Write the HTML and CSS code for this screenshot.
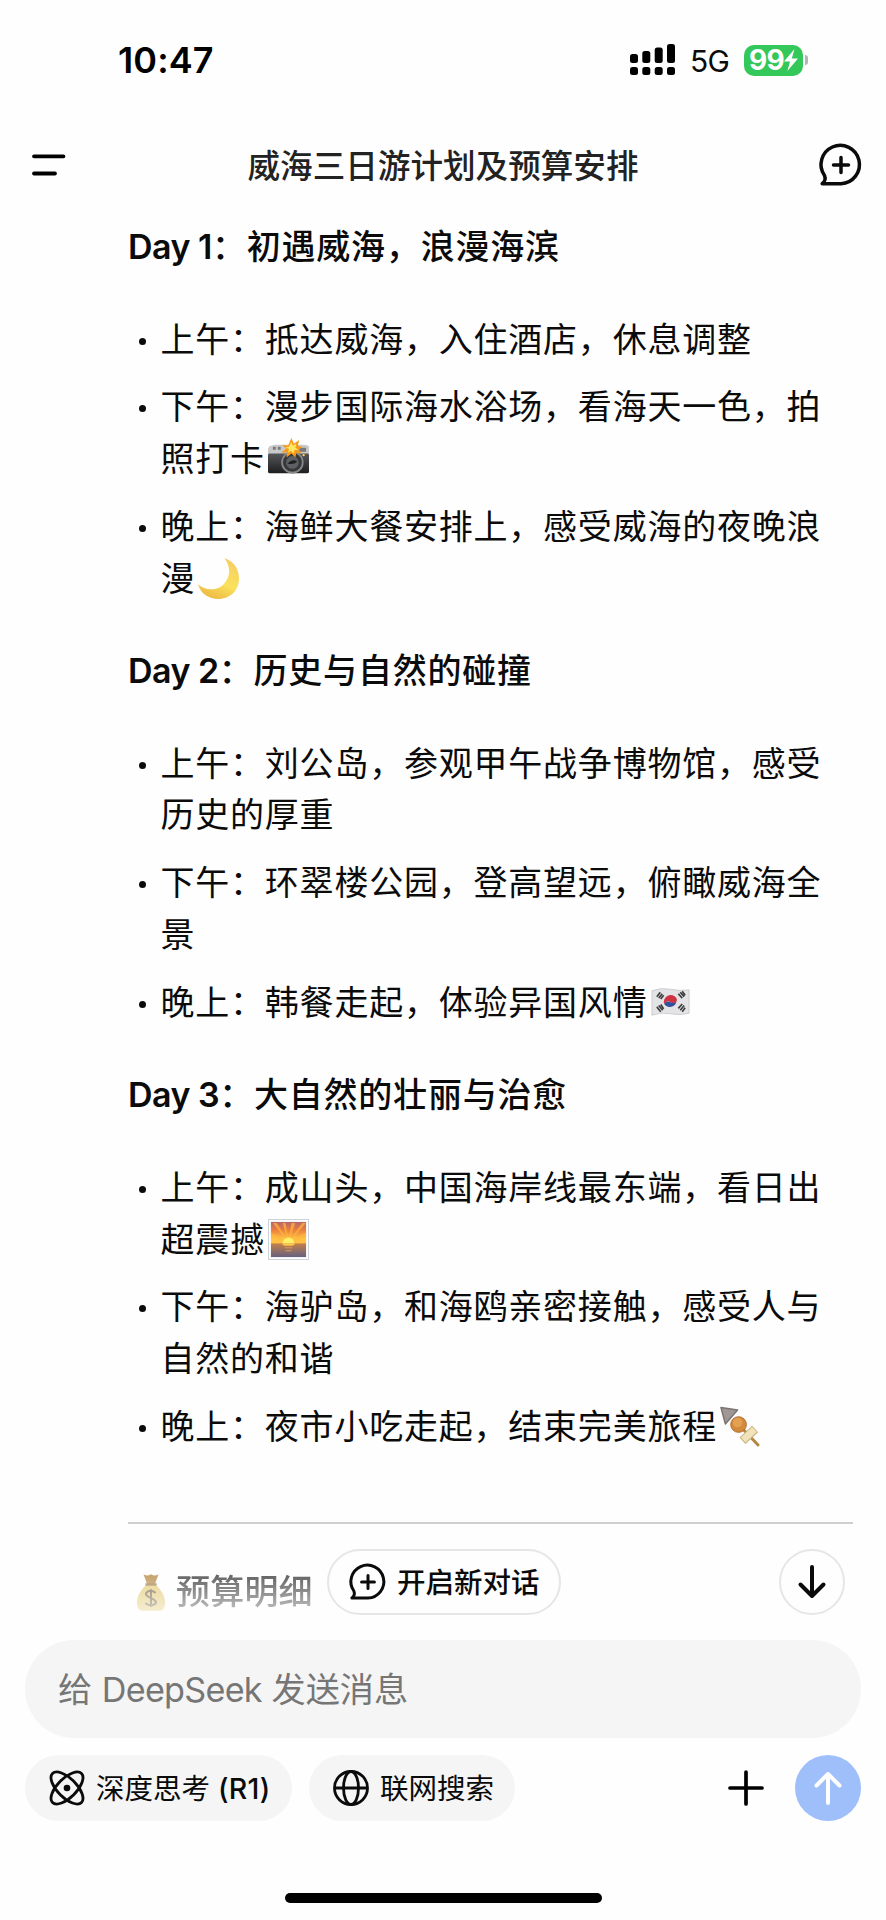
FILE: index.html
```
<!DOCTYPE html>
<html lang="zh-CN">
<head>
    <meta charset="UTF-8">
    <meta name="viewport" content="width=device-width, initial-scale=1.0">
    <title>威海三日游计划及预算安排</title>
    <link rel="stylesheet" href="styles.css">
</head>
<body>
    <div class="app">
        <div class="status-bar">
            <span class="time">10:47</span>
            <div class="status-right">
                <svg class="signal" viewBox="0 0 46 32">
                    <rect x="0" y="10" width="8" height="9" rx="2.5"/>
                    <rect x="12.3" y="7" width="8" height="12" rx="2.5"/>
                    <rect x="24.7" y="3.5" width="8" height="15.5" rx="2.5"/>
                    <rect x="37" y="0" width="8" height="19" rx="2.5"/>
                    <rect x="0" y="23" width="8" height="8" rx="2.5"/>
                    <rect x="12.3" y="23" width="8" height="8" rx="2.5"/>
                    <rect x="24.7" y="23" width="8" height="8" rx="2.5"/>
                    <rect x="37" y="23" width="8" height="8" rx="2.5"/>
                </svg>
                <span class="network">5G</span>
                <div class="battery">
                    <span>99</span>
                    <svg class="bolt" viewBox="0 0 14 22"><path d="M10.5 0 0 12.4h6L3.4 22 14 9.4H7.8z"/></svg>
                </div>
                <span class="battery-cap"></span>
            </div>
        </div>

        <div class="header">
            <svg class="menu-icon" viewBox="0 0 34 22"><path d="M2 2.3h29.500M2 19.500h21"/></svg>
            <h1>威海三日游计划及预算安排</h1>
            <svg class="chat-icon" viewBox="0 0 42 42"><path d="M21 39.700H2.200Q6.500 36.500 4.500 31.500A19.200 19.200 0 1 1 21 39.700zM21 13.500v15M13.500 21h15"/></svg>
        </div>

        <div class="content">
            <h2><span class="day">Day 1</span>：初遇威海，浪漫海滨</h2>
            <ul>
                <li>上午：抵达威海，入住酒店，休息调整</li>
                <li>下午：漫步国际海水浴场，看海天一色，拍照打卡<svg class="emoji" viewBox="0 0 42 42">
                    <defs>
                        <linearGradient id="cam" x2="0" y2="1"><stop stop-color="#55565a"/><stop offset="1" stop-color="#1e1e20"/></linearGradient>
                    </defs>
                    <path d="M0 12q0-3 3-4l4-1h29q5 0 6 2v8H0z" fill="#c9c9ca"/>
                    <rect y="16" width="42" height="20" rx="1.500" fill="url(#cam)"/>
                    <path d="M5 9h3v3H5zM10 9h3v3h-3zM32 10h7v4h-7z" fill="#77797a"/>
                    <circle cx="25" cy="25" r="11.500" fill="#86888a"/>
                    <circle cx="25" cy="25" r="9.700" fill="#37383a"/>
                    <circle cx="25" cy="25" r="6.500" fill="#5d6064"/>
                    <path d="M20 26q5-5 10-2-4 4-10 2z" fill="#1e2024"/>
                    <path d="m24 0 2.500 6L32 2l-1.500 6 5 1-4.500 3 4 4-6-1-1 5-4-4-5 4 .5-5.500-6 .5 5-4-4-4 6 1z" fill="#f79a18"/>
                    <path d="m24 4 1.500 4 3.500-2-1 4 3 2-4 .5-1 3.500-2.500-3-3 2 1-4-4-1 4-1z" fill="#ffe763"/>
                    <circle cx="36.500" cy="17.500" r="1.200" fill="#ffd34b"/>
                </svg></li>
                <li>晚上：海鲜大餐安排上，感受威海的夜晚浪漫<svg class="emoji" viewBox="0 0 42 42">
                    <defs>
                        <linearGradient id="moon" x1=".8" y1=".1" x2=".4" y2="1"><stop stop-color="#f6cf63"/><stop offset=".55" stop-color="#fae25c"/><stop offset="1" stop-color="#eebb45"/></linearGradient>
                    </defs>
                    <path d="M27 0C38 4 42 12 42 21 42 33 33 42 21 42 11 42 3 37 0 27 8 34 20 34 27 26 34 18 33 8 27 0z" fill="url(#moon)"/>
                </svg></li>
            </ul>

            <h2><span class="day">Day 2</span>：历史与自然的碰撞</h2>
            <ul>
                <li>上午：刘公岛，参观甲午战争博物馆，感受历史的厚重</li>
                <li>下午：环翠楼公园，登高望远，俯瞰威海全景</li>
                <li>晚上：韩餐走起，体验异国风情<svg class="emoji" viewBox="0 0 42 42">
                    <path d="M2 9q9-3.500 19-1.500T40 8v24q-9 2.500-19 .5T2 34z" fill="#e4e4e6" stroke="#c4c4c7" stroke-width=".8"/>
                    <path d="M14.500 22.500a7 7 0 0 1 12.500-6q1.500 3-1 4.500t-5.500-.5-6 2z" fill="#cf3343"/>
                    <path d="M14.500 22.500q2.500-3.500 6-2t5.500.5 1-4.500a7 7 0 0 1-12.500 6z" fill="#31519b"/>
                    <g stroke="#3c3c3e" stroke-width="1.700">
                        <path d="m7 15 3.500-4.500M9 16.500l3.500-4.500M11 17.500l3-4M29 12l4 4.500M31 10.500l4 4.500M33 9.500l3 4M7 25.500l4 5M9 24l4 5M11 23l3 4.500M29 27l4-4.500M31 29l4-5M33 30.500l3-4"/>
                    </g>
                </svg></li>
            </ul>

            <h2><span class="day">Day 3</span>：大自然的壮丽与治愈</h2>
            <ul>
                <li>上午：成山头，中国海岸线最东端，看日出超震撼<svg class="emoji" viewBox="0 0 42 42">
                    <defs>
                        <linearGradient id="sky" x2="0" y2="1"><stop stop-color="#b5656a"/><stop offset=".35" stop-color="#ec7e3d"/><stop offset=".7" stop-color="#ffc044"/></linearGradient>
                        <linearGradient id="sea" x2="0" y2="1"><stop stop-color="#c38048"/><stop offset="1" stop-color="#666080"/></linearGradient>
                    </defs>
                    <rect x=".5" y=".5" width="41" height="41" fill="#fdfdfd" stroke="#cbd1d8"/>
                    <rect x="3" y="3" width="36" height="24" fill="url(#sky)"/>
                    <path d="M21 24 5 4h4zM21 24 15 4h3zM21 24l3-20h4zM21 24 35 4h4zM21 24 3 14v4zM21 24l18-10v4z" fill="#ffb83d" opacity=".7"/>
                    <rect x="3" y="25" width="36" height="14" fill="url(#sea)"/>
                    <path d="M15 25a6 6 0 0 1 12 0z" fill="#fff06a"/>
                    <path d="M14 25.500h14l-3 2h-8z" fill="#ffc34d"/>
                    <path d="M17 29h8v1h-8zM18 32h6v1h-6z" fill="#d99a58"/>
                </svg></li>
                <li>下午：海驴岛，和海鸥亲密接触，感受人与自然的和谐</li>
                <li>晚上：夜市小吃走起，结束完美旅程<svg class="emoji" viewBox="0 0 42 42">
                    <path d="m17 17 22 23" stroke="#b28742" stroke-width="3" stroke-linecap="round"/>
                    <path d="M1 1.500 18 4 5.500 18.500z" fill="#9f9795" stroke="#7d7472" stroke-width="1.500" stroke-linejoin="round"/>
                    <circle cx="19" cy="19" r="8" fill="#d48a3c" stroke="#ac6a2c"/>
                    <circle cx="18" cy="17" r="5" fill="#e3a052"/>
                    <path d="m23 35.500 13-12" stroke="#c9b17c" stroke-width="9"/>
                    <path d="m23.700 34.900 11.600-10.800" stroke="#f0e3b9" stroke-width="7"/>
                </svg></li>
            </ul>

            <hr>

            <h2 class="budget"><svg class="emoji money" viewBox="0 0 32 42">
                <path d="M8 2q4 3 8 0 4 3 8 0l-4 11h-8z" fill="#a8701c"/>
                <path d="M11 13h10q10 10 10 19 0 9-6 9H7q-6 0-6-9 0-9 10-19z" fill="#ddbd50"/>
                <path d="M10 13h12" stroke="#855a24" stroke-width="2.500"/>
                <path d="M21 22q-5-4-9-1t4 6.500 4 6.500-10-1M16 18v19" stroke="#4e3a1c" stroke-width="2.200" fill="none"/>
            </svg>预算明细</h2>

            <div class="floating">
                <button class="new-chat">
                    <svg class="chat-icon small" viewBox="0 0 42 42"><path d="M21 39.700H2.200Q6.500 36.500 4.500 31.500A19.200 19.200 0 1 1 21 39.700zM21 13.500v15M13.500 21h15"/></svg>
                    <span>开启新对话</span>
                </button>
                <button class="scroll-down">
                    <svg class="arrow" viewBox="0 0 28 34"><path d="M14 2v29M2.500 19.500 14 31l11.500-11.500"/></svg>
                </button>
            </div>
        </div>

        <div class="footer">
            <div class="input-box">给 <span class="brand">DeepSeek</span> 发送消息</div>
            <div class="tools">
                <button class="chip">
                    <svg class="atom" viewBox="0 0 36 36">
                        <ellipse cx="18" cy="18" rx="20.500" ry="9.500" transform="rotate(45 18 18)"/>
                        <ellipse cx="18" cy="18" rx="20.500" ry="9.500" transform="rotate(-45 18 18)"/>
                        <circle class="core" cx="18" cy="18" r="3.300"/>
                    </svg>
                    <span>深度思考 <span class="model">(R1)</span></span>
                </button>
                <button class="chip web">
                    <svg class="globe" viewBox="0 0 36 36">
                        <circle cx="18" cy="18" r="16.500"/>
                        <ellipse cx="18" cy="18" rx="7.500" ry="16.500"/>
                        <path d="M1.500 18h33"/>
                    </svg>
                    <span>联网搜索</span>
                </button>
                <svg class="plus" viewBox="0 0 36 36"><path d="M18 2v32M2 18h32"/></svg>
                <button class="send">
                    <svg class="arrow" viewBox="0 0 28 34"><path d="M14 32V3M2.500 14.500 14 3l11.500 11.500"/></svg>
                </button>
            </div>
            <div class="home-bar"></div>
        </div>
    </div>
</body>
</html>
```
FILE: styles.css
```
* {
    margin: 0;
    padding: 0;
    box-sizing: border-box;
}

body {
    background: #fefefe;
    color: #0b0b0b;
    font-family: Inter, "Noto Sans CJK SC", sans-serif;
}

button {
    border: none;
    font: inherit;
    color: inherit;
}

svg {
    flex: none;
    fill: none;
    overflow: visible;
}

.app {
    width: 886px;
    height: 1920px;
    display: flex;
    flex-direction: column;
    overflow: hidden;
}

/* status bar */
.status-bar {
    height: 120px;
    padding: 0 78px 0 118px;
    display: flex;
    align-items: center;
    justify-content: space-between;
}

.time {
    font-size: 36px;
    font-weight: 600;
    letter-spacing: 0.1px;
    color: #000;
}

.status-right {
    display: flex;
    align-items: center;
}

.signal {
    width: 46px;
    height: 32px;
    fill: #000;
}

.network {
    width: 54px;
    margin-left: 14px;
    padding-top: 2px;
    font-size: 30px;
    letter-spacing: -0.8px;
}

.battery {
    width: 59px;
    height: 31px;
    padding-left: 5px;
    border-radius: 10px;
    background: #34c759;
    color: #fff;
    font-size: 28px;
    font-weight: 700;
    letter-spacing: -0.8px;
    line-height: 31px;
    display: flex;
    align-items: center;
}

.bolt {
    width: 14px;
    height: 22px;
    fill: #fff;
}

.battery-cap {
    width: 3px;
    height: 10px;
    margin-left: 2px;
    border-radius: 0 5px 5px 0;
    background: #b5b5b5;
}

/* header */
.header {
    height: 90px;
    padding: 0 24px 0 32px;
    display: flex;
    align-items: center;
    justify-content: space-between;
}

.header h1 {
    padding-bottom: 4px;
    font-size: 32.6px;
    font-weight: 500;
    color: #222;
}

.menu-icon {
    width: 34px;
    height: 22px;
    stroke: #000;
    stroke-width: 3.8;
    stroke-linecap: round;
}

.chat-icon {
    width: 42px;
    height: 42px;
    stroke: #0b0b0b;
    stroke-width: 3.5;
    stroke-linecap: round;
    stroke-linejoin: round;
}

.chat-icon.small {
    width: 36px;
    height: 36px;
}

/* answer */
.content {
    position: relative;
    height: 1430px;
    padding: 11px 33px 0 128px;
}

.content h2 {
    font-size: 34px;
    font-weight: 500;
    line-height: 51.6px;
    letter-spacing: 0.78px;
    margin: 0 0 41px;
}

.content .day {
    font-weight: 600;
    letter-spacing: -0.5px;
}

.content ul {
    list-style: none;
    margin-bottom: 41px;
}

.content li {
    position: relative;
    padding-left: 32.5px;
    font-size: 34px;
    line-height: 51.6px;
    letter-spacing: 0.78px;
}

.content li + li {
    margin-top: 16.3px;
}

.content li::before {
    content: '';
    position: absolute;
    left: 11px;
    top: 24px;
    width: 7px;
    height: 7px;
    border-radius: 50%;
    background: #0b0b0b;
}

.emoji {
    width: 41px;
    height: 41px;
    margin: -4px 0 -4px 3px;
    vertical-align: -4px;
}

.content hr {
    border: none;
    height: 2px;
    margin-top: 70px;
    background: #cfcfcf;
}

.content .budget {
    display: flex;
    align-items: center;
    margin: 42px 0 0;
    letter-spacing: 0.2px;
    -webkit-mask-image: linear-gradient(#000b, #0004 85%, transparent);
    mask-image: linear-gradient(#000b, #0004 85%, transparent);
}

.emoji.money {
    width: 30px;
    height: 40px;
    margin: 0 10px 0 8px;
}

.floating {
    position: absolute;
    left: 327px;
    right: 41px;
    top: 1339px;
    display: flex;
    justify-content: space-between;
}

.new-chat {
    width: 234px;
    height: 66px;
    border: 2px solid #e6e6e6;
    border-radius: 33px;
    background: #fefefe;
    display: flex;
    align-items: center;
    padding-left: 21px;
    gap: 11px;
    font-size: 28.5px;
    font-weight: 500;
}

.new-chat span,
.chip > span {
    padding-bottom: 3px;
}

.scroll-down {
    width: 66px;
    height: 66px;
    border: 2px solid #e6e6e6;
    border-radius: 50%;
    background: #fefefe;
    display: flex;
    align-items: center;
    justify-content: center;
}

.arrow {
    width: 28px;
    height: 34px;
    stroke: #0b0b0b;
    stroke-width: 4;
    stroke-linecap: round;
    stroke-linejoin: round;
}

/* bottom area */
.footer {
    padding: 0 25px;
}

.input-box {
    height: 98px;
    padding-left: 33px;
    border-radius: 49px;
    background: #f5f5f5;
    color: #767676;
    font-size: 34.2px;
    line-height: 99px;
}

.brand {
    letter-spacing: -0.75px;
}

.tools {
    margin-top: 17px;
    display: flex;
    align-items: center;
}

.chip {
    width: 267px;
    height: 66px;
    padding-left: 24px;
    border-radius: 33px;
    background: #f5f5f5;
    display: flex;
    align-items: center;
    gap: 11px;
    font-size: 28.5px;
    white-space: nowrap;
}

.model {
    font-weight: 500;
    letter-spacing: 0.3px;
}

.chip.web {
    width: 206px;
    margin-left: 17px;
}

.atom,
.globe {
    width: 36px;
    height: 36px;
    stroke: #0b0b0b;
    stroke-width: 2.8;
}

.core {
    fill: #0b0b0b;
    stroke: none;
}

.plus {
    width: 36px;
    height: 36px;
    margin-left: auto;
    stroke: #000;
    stroke-width: 3.7;
    stroke-linecap: round;
}

.send {
    width: 66px;
    height: 66px;
    margin-left: 31px;
    border-radius: 50%;
    background: #9fbffb;
    display: flex;
    align-items: center;
    justify-content: center;
}

.send .arrow {
    stroke: #fff;
}

.home-bar {
    width: 317px;
    height: 10px;
    margin: 72px auto 0;
    border-radius: 5px;
    background: #000;
}
```
